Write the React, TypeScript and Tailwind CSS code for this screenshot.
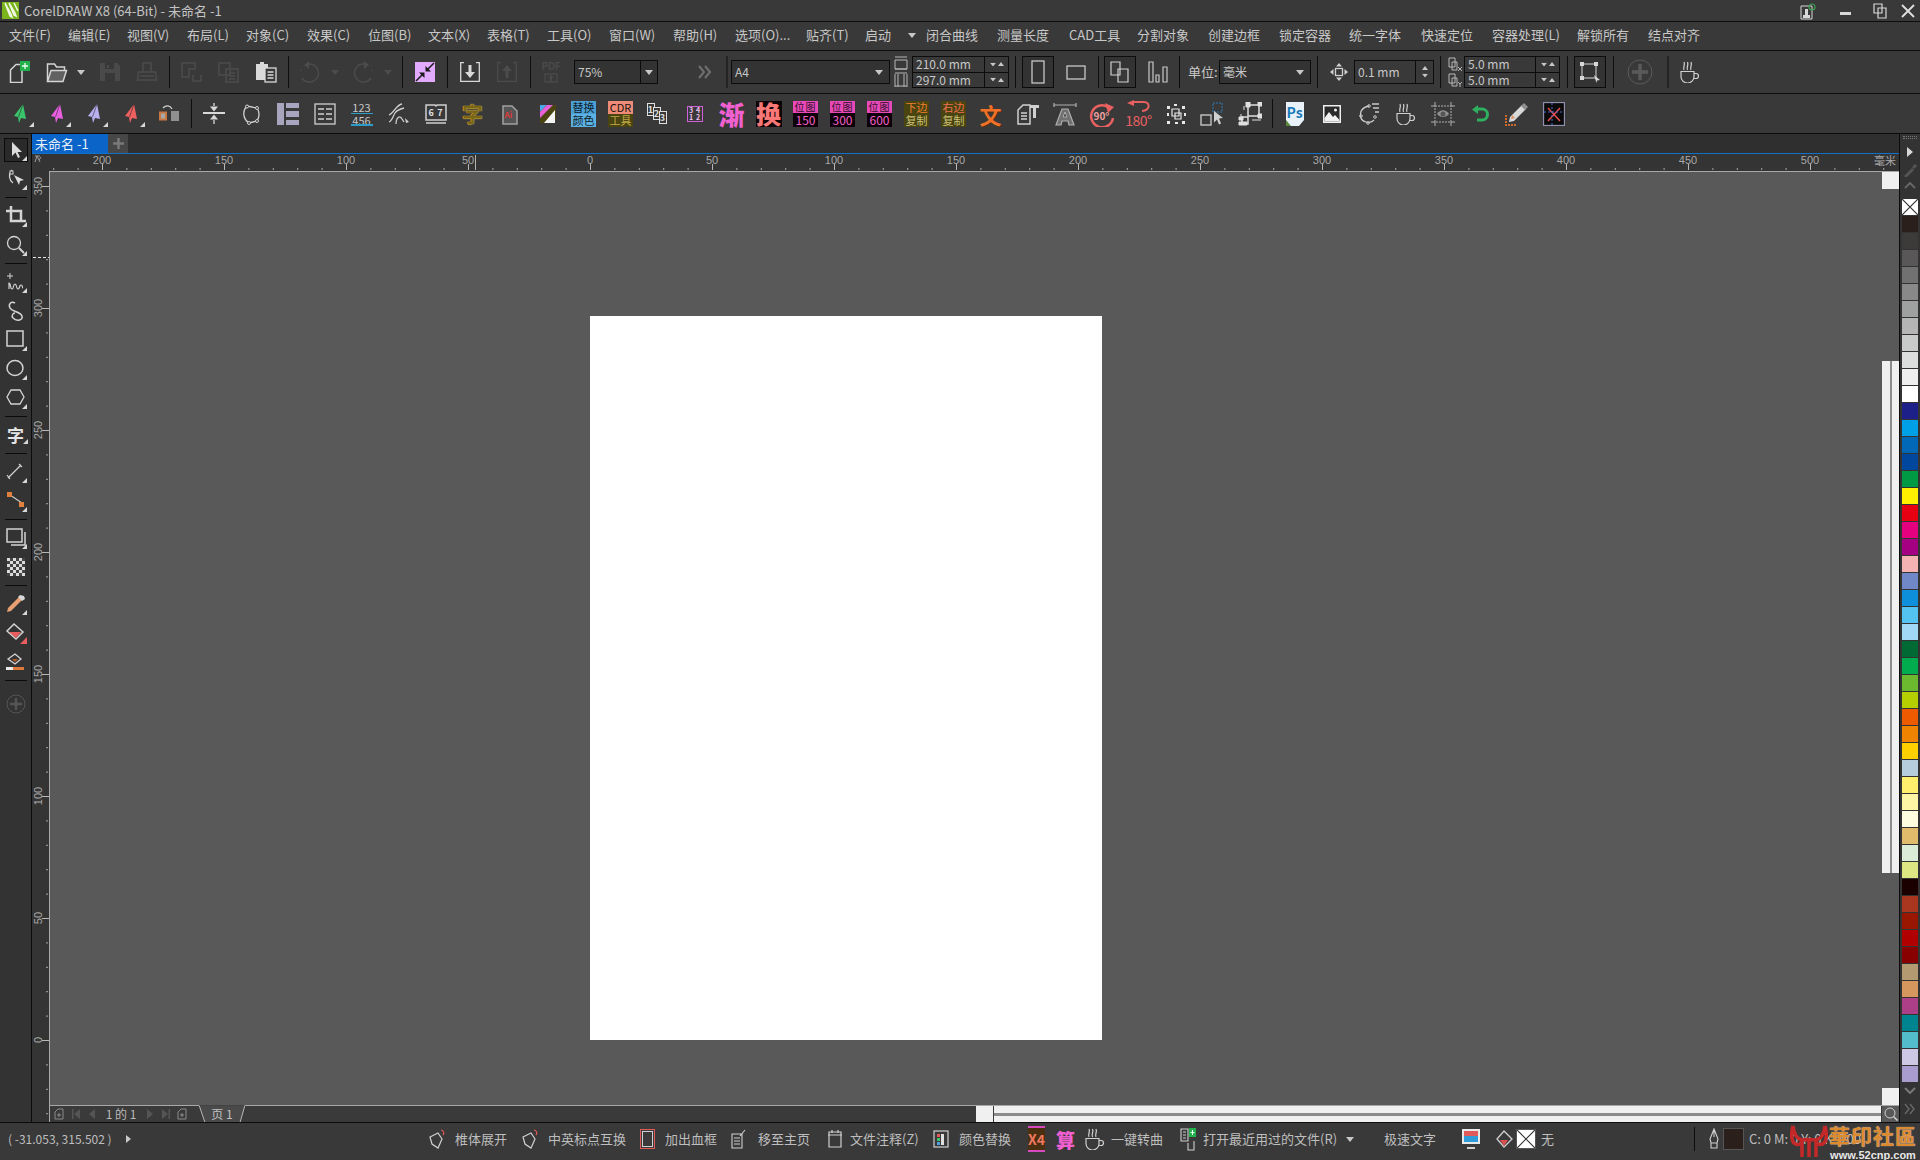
import React from "react";

type SvgProps = { w?: number; h?: number; className?: string; children?: React.ReactNode };

const Svg = ({ w = 22, h = 22, className = "", children }: SvgProps) => (
  <svg width={w} height={h} viewBox={`0 0 ${w} ${h}`} fill="none" stroke="currentColor" className={"block shrink-0 " + className}>
    {children}
  </svg>
);

const Down = ({ c = "fill-[#c8c8c8]" }: { c?: string }) => (
  <svg width="8" height="5" viewBox="0 0 8 5" className={"block " + c}><polygon points="0,0 8,0 4,5" /></svg>
);
const Up = ({ c = "fill-[#c8c8c8]" }: { c?: string }) => (
  <svg width="6" height="4" viewBox="0 0 6 4" className={"block " + c}><polygon points="0,4 6,4 3,0" /></svg>
);
const Flyout = () => <polygon points="22,17 22,22 17,22" fill="#d8d8d8" stroke="none" />;

/* ---------- menu ---------- */
const menus = [
  { t: "文件(F)", w: "w-[59px]" }, { t: "编辑(E)", w: "w-[59px]" }, { t: "视图(V)", w: "w-[60px]" }, { t: "布局(L)", w: "w-[59px]" },
  { t: "对象(C)", w: "w-[61px]" }, { t: "效果(C)", w: "w-[61px]" }, { t: "位图(B)", w: "w-[60px]" }, { t: "文本(X)", w: "w-[59px]" },
  { t: "表格(T)", w: "w-[60px]" }, { t: "工具(O)", w: "w-[62px]" }, { t: "窗口(W)", w: "w-[64px]" }, { t: "帮助(H)", w: "w-[62px]" },
  { t: "选项(O)...", w: "w-[71px]" }, { t: "贴齐(T)", w: "w-[59px]" }, { t: "启动", w: "w-[43px]" },
];
const menus2 = [
  { t: "闭合曲线", w: "w-[71px]" }, { t: "测量长度", w: "w-[72px]" }, { t: "CAD工具", w: "w-[68px]" }, { t: "分割对象", w: "w-[71px]" },
  { t: "创建边框", w: "w-[71px]" }, { t: "锁定容器", w: "w-[70px]" }, { t: "统一字体", w: "w-[72px]" }, { t: "快速定位", w: "w-[71px]" },
  { t: "容器处理(L)", w: "w-[85px]" }, { t: "解锁所有", w: "w-[71px]" }, { t: "结点对齐", w: "w-[71px]" },
];

/* ---------- toolbar 1 icons ---------- */
const NewDoc = () => (
  <Svg className="text-[#d4d4d4]">
    <path d="M1.5 9 7 3.5h6V21.5H1.5z" strokeWidth="1.5" />
    <rect x="11" y="0" width="10" height="10" fill="#22b14c" stroke="none" />
    <path d="M16 2v6M13 5h6" stroke="#eafff0" strokeWidth="1.3" />
  </Svg>
);
const OpenDoc = () => (
  <Svg className="text-[#d4d4d4]">
    <path d="M1.5 20V3h7l2 3h8v3" strokeWidth="1.5" />
    <path d="M5 9.5h15.5L17 20.5H1.5z" fill="#dcdcdc" fillOpacity=".25" strokeWidth="1.5" />
  </Svg>
);
const SaveIc = () => (
  <Svg className="text-[#4a4a4a]">
    <path d="M1 2h17l3 3v15H1z" fill="#4a4a4a" stroke="none" />
    <rect x="6" y="2" width="9" height="6" fill="#383838" stroke="none" />
    <rect x="6" y="12" width="10" height="8" fill="#383838" stroke="none" />
    <rect x="8" y="4" width="2" height="3" fill="#4a4a4a" stroke="none" />
  </Svg>
);
const PrintIc = () => (
  <Svg className="text-[#4c4c4c]">
    <path d="M7 11V2h8v9M2.5 11h17l1 8h-19zM4 15h14" strokeWidth="1.5" />
  </Svg>
);
const CutIc = () => (
  <Svg className="text-[#4c4c4c]">
    <path d="M1 2h13v6H8v8H1zM12 14v6h8v-6" strokeWidth="1.5" />
  </Svg>
);
const CopyIc = () => (
  <Svg className="text-[#4c4c4c]">
    <path d="M1 2h11v12H1zM8 8h12v13H8zM11 12h6M11 15h6M11 18h6" strokeWidth="1.5" />
  </Svg>
);
const PasteIc = () => (
  <Svg className="text-[#dadada]">
    <path d="M1 3h4V1h4v2h4v16H1z" fill="#dadada" stroke="none" />
    <rect x="10" y="7" width="11" height="14" fill="#383838" stroke="#dadada" strokeWidth="1.3" />
    <path d="M12.5 11h6M12.5 14h6M12.5 17h6" stroke="#dadada" strokeWidth="1.3" />
  </Svg>
);
const UndoIc = ({ flip }: { flip?: boolean }) => (
  <Svg className={"text-[#4c4c4c] " + (flip ? "-scale-x-100" : "")}>
    <path d="M10 3a9 9 0 1 1-7 14" strokeWidth="1.5" />
    <path d="M10 0v8L5 4z" fill="#4c4c4c" stroke="none" />
    <path d="M2 9v1" strokeWidth="1.5" />
  </Svg>
);
const PurpleIc = () => (
  <div className="w-[20px] h-[20px] bg-[#e2aafd]">
    <Svg w={20} h={20} className="text-[#1a1a1a]">
      <path d="M19 1 11.5 8.5M1 19l7.5-7.5" strokeWidth="1.5" />
      <path d="M10.5 4v5.500h5.500zM9.500 16v-5.500H4z" fill="#1a1a1a" stroke="none" />
    </Svg>
  </div>
);
const ImportIc = ({ up }: { up?: boolean }) => (
  <Svg w={20} h={20} className={up ? "text-[#4c4c4c]" : "text-[#d8d8d8]"}>
    <path d="M4 .7H.7v18.600h18.600V.7H16" strokeWidth="1.3" />
    {up ? <path d="M10 3l5 6h-3.500v7h-3V9H5z" fill="#4c4c4c" stroke="none" /> : <path d="M10 16l5-6h-3.500V3h-3v7H5z" fill="#d8d8d8" stroke="none" />}
  </Svg>
);
const Pdf = () => (
  <div className="flex flex-col items-center leading-none text-[#4a4a4a]">
    <span className="text-[10px] font-bold tracking-[-0.3px]">PDF</span>
    <Svg w={14} h={11} className="text-[#4a4a4a] mt-[1px]">
      <path d="M1 10V2h12v8z" strokeWidth="1.3" /><path d="M7 3l3 3H8v3H6V6H4z" fill="#4a4a4a" stroke="none" />
    </Svg>
  </div>
);
const Chevrons = ({ c = "text-[#707070]" }: { c?: string }) => (
  <Svg w={16} h={14} className={c}>
    <path d="M2 1l5 6-5 6M8 1l5 6-5 6" strokeWidth="2" />
  </Svg>
);

const Sep = ({ w, thick }: { w: string; thick?: boolean }) => (
  <div className={"flex justify-center self-stretch py-[5px] shrink-0 " + w}>
    <div className={thick ? "w-[2px] bg-[#232323]" : "w-[1px] bg-[#0e0e0e]"} />
  </div>
);

const Cell = ({ w, children }: { w: string; children?: React.ReactNode }) => (
  <div className={"flex items-center justify-center shrink-0 " + w}>{children}</div>
);

const Combo = ({ w, text, divider }: { w: string; text: string; divider?: boolean }) => (
  <div className={"flex h-[24px] items-center border border-[#0c0c0c] bg-[#333333] shrink-0 " + w}>
    <div className="flex-1 pl-[3px] text-[12px] text-[#c8c8c8]">{text}</div>
    <div className={"flex h-full w-[17px] items-center justify-center " + (divider ? "border-l border-[#0c0c0c]" : "pr-[4px]")}>
      <Down />
    </div>
  </div>
);

const Stepper = ({ w, a, b }: { w: string; a: string; b: string }) => (
  <div className={"flex h-[32px] flex-col border border-[#0c0c0c] shrink-0 " + w}>
    {[a, b].map((v, i) => (
      <div key={i} className={"flex flex-1 items-center " + (i === 1 ? "border-t border-[#0c0c0c]" : "")}>
        <div className="flex-1 pl-[3px] text-[12px] leading-none text-[#c8c8c8]">{v}</div>
        <div className="flex h-full w-[24px] items-center justify-around border-l border-[#0c0c0c] px-[3px]">
          <Down c="fill-[#c8c8c8] scale-75" /><Up />
        </div>
      </div>
    ))}
  </div>
);

const Boxed = ({ children }: { children?: React.ReactNode }) => (
  <div className="flex h-[32px] w-[32px] items-center justify-center border border-[#0c0c0c] bg-[#333333] shrink-0">{children}</div>
);

const Cup = ({ c = "text-[#d0d0d0]" }: { c?: string }) => (
  <Svg className={c}>
    <path d="M2 10.500v5a6.500 6.500 0 0 0 13 0v-5zM15 12.500h2a2.500 2.500 0 0 1 0 5h-2" strokeWidth="1.2" />
    <path d="M5 9c-1.500-3 1.500-4.500 0-8M8.500 9c-1.500-3 1.500-4.500 0-8M12 9c-1.500-3 1.500-4.500 0-8" strokeWidth="1.2" />
  </Svg>
);

function TopTools() {
  return (
    <div className="flex h-[43px] items-center border-b border-[#0c0c0c] pl-[1px] shrink-0">
      <Cell w="w-[38px]"><NewDoc /></Cell>
      <Cell w="w-[36px]"><OpenDoc /></Cell>
      <Cell w="w-[12px]"><Down /></Cell>
      <Cell w="w-[46px]"><SaveIc /></Cell>
      <Cell w="w-[28px]"><PrintIc /></Cell>
      <Sep w="w-[16px]" />
      <Cell w="w-[30px]"><CutIc /></Cell>
      <Cell w="w-[44px]"><CopyIc /></Cell>
      <Cell w="w-[30px]"><PasteIc /></Cell>
      <Sep w="w-[14px]" />
      <Cell w="w-[30px]"><UndoIc /></Cell>
      <Cell w="w-[20px]"><Down c="fill-[#4c4c4c]" /></Cell>
      <Cell w="w-[36px]"><UndoIc flip /></Cell>
      <Cell w="w-[14px]"><Down c="fill-[#4c4c4c]" /></Cell>
      <Sep w="w-[14px]" />
      <Cell w="w-[32px]"><PurpleIc /></Cell>
      <Sep w="w-[12px]" />
      <Cell w="w-[34px]"><ImportIc /></Cell>
      <Cell w="w-[40px]"><ImportIc up /></Cell>
      <Sep w="w-[6px]" />
      <Cell w="w-[36px]"><Pdf /></Cell>
      <div className="w-[5px]" />
      <Combo w="w-[84px]" text="75%" divider />
      <div className="w-[29px]" />
      <Cell w="w-[36px]"><Chevrons /></Cell>
      <Sep w="w-[8px]" thick />
      <Combo w="w-[159px]" text="A4" />
      <Cell w="w-[22px]">
        <Svg w={14} h={32} className="text-[#b8b8b8]">
          <path d="M1 1h12M1 13h12M1 4h12v9H1zM1 17h12M1 30h12" strokeWidth="1" />
          <path d="M1 18v13M13 18v13M4 18v13M10 18v13" strokeWidth="1" />
        </Svg>
      </Cell>
      <Stepper w="w-[97px]" a="210.0 mm" b="297.0 mm" />
      <Sep w="w-[12px]" />
      <div className="ml-[1px]"><Boxed><Svg w={14} h={24} className="text-[#c8c8c8]"><rect x="1" y="1" width="12" height="22" strokeWidth="1.3" /></Svg></Boxed></div>
      <Cell w="w-[43px]"><Svg w={20} h={15} className="text-[#c8c8c8]"><rect x="1" y="1" width="18" height="13" strokeWidth="1.3" /></Svg></Cell>
      <Sep w="w-[3px]" />
      <div className="w-[4px] shrink-0" />
      <Boxed>
        <Svg w={20} h={22} className="text-[#d0d0d0]"><path d="M1 1h9v13H1zM8 8h10v13H8z" fill="#383838" strokeWidth="1.2" /></Svg>
      </Boxed>
      <Cell w="w-[43px]">
        <Svg w={20} h={22} className="text-[#c8c8c8]"><path d="M1 1h4v20H1zM8 14h3v7H8zM15 6h4v15h-4z" strokeWidth="1.2" /></Svg>
      </Cell>
      <div className="w-[1px] self-stretch my-[5px] bg-[#0c0c0c]" />
      <div className="w-[39px] pl-[8px] text-[13px] text-[#c8c8c8] whitespace-nowrap shrink-0">单位:</div>
      <Combo w="w-[92px]" text="毫米" />
      <Sep w="w-[13px]" />
      <Cell w="w-[30px]">
        <Svg w={18} h={18} className="text-[#d0d0d0]">
          <rect x="5.500" y="5.500" width="7" height="7" strokeWidth="1.3" />
          <path d="M9 0l3 3.500H6zM9 18l3-3.500H6zM0 9l3.500 3V6zM18 9l-3.500 3V6z" fill="#d0d0d0" stroke="none" />
        </Svg>
      </Cell>
      <div className="flex h-[24px] w-[80px] items-center border border-[#0c0c0c] shrink-0">
        <div className="flex-1 pl-[3px] text-[12px] text-[#c8c8c8]">0.1 mm</div>
        <div className="flex h-full w-[18px] flex-col items-center justify-around border-l border-[#0c0c0c] py-[3px]">
          <Up /><Down c="fill-[#c8c8c8] scale-75" />
        </div>
      </div>
      <Sep w="w-[12px]" />
      <Cell w="w-[18px]">
        <Svg w={15} h={32} className="text-[#b8b8b8]">
          <path d="M1 2h6v9H1zM4 6h5v8H4zM1 18h6v9H1zM4 22h5v8H4z" strokeWidth="1" />
          <path d="M10 11l4 4M14 11l-4 4M10 26l2 2 2-2M12 28v3" strokeWidth="1" />
        </Svg>
      </Cell>
      <Stepper w="w-[96px]" a="5.0 mm" b="5.0 mm" />
      <Sep w="w-[14px]" />
      <Boxed>
        <Svg w={22} h={22} className="text-[#d8d8d8]">
          <path d="M3 3h14v14H3z" strokeWidth="1" />
          <path d="M1 1h4v4H1zM15 1h4v4h-4zM1 15h4v4H1z" fill="#d8d8d8" stroke="none" />
          <path d="M15 14l6 5-3 .5-.5 2.500z" fill="#d8d8d8" stroke="none" />
        </Svg>
      </Boxed>
      <Sep w="w-[14px]" />
      <Cell w="w-[40px]">
        <Svg w={26} h={26} className="text-[#5a5a5a]">
          <circle cx="13" cy="13" r="12" strokeWidth="1" />
          <path d="M13 5v16M5 13h16" strokeWidth="3.500" />
        </Svg>
      </Cell>
      <Sep w="w-[16px]" thick />
      <Cell w="w-[28px]"><Cup /></Cell>
    </div>
  );
}

/* ---------- toolbar 2 icons ---------- */
const Plane = ({ fill }: { fill: string }) => (
  <Svg w={26} h={26} className="text-[#1f1f1f]">
    <polygon points="15,3 6,15 10,16 11,22 13,17 18,18" fill={fill} stroke="none" />
    <path d="M15 3 10.500 16" stroke="#202020" strokeOpacity=".55" />
    <polygon points="26,21 26,26 21,26" fill="#d8d8d8" stroke="none" />
  </Svg>
);

const Badge = ({ a, b, ca, cb }: { a: string; b: string; ca: string; cb: string }) => (
  <div className="flex h-[26px] w-[25px] flex-col text-center leading-none whitespace-nowrap">
    <div className={"flex h-[13px] items-center justify-center text-[11px] leading-none " + ca}>{a}</div>
    <div className={"flex h-[13px] items-center justify-center text-[11px] leading-none " + cb}>{b}</div>
  </div>
);

const tools2a: React.ReactNode[] = [
  <Svg key="a" w={24} h={22} className="text-[#d8d8d8]">
    <path d="M1 10h22" strokeWidth="2" />
    <path d="M12 0v3M12 17v4" strokeWidth="1.3" />
    <path d="M8 3.500h8L12 8.500zM8 16.500h8l-4-5z" fill="#d8d8d8" stroke="none" />
  </Svg>,
  <Svg key="b" className="text-[#d0d0d0]">
    <path d="M7 3 17 5c2 3 3 8 0 13L9 20C3 16 2 8 7 3z" strokeWidth="1.3" />
    <circle cx="7" cy="3.500" r="1.500" fill="#383838" /><circle cx="17" cy="5" r="1.500" fill="#383838" /><circle cx="17" cy="18" r="1.500" fill="#383838" /><circle cx="9" cy="20" r="1.500" fill="#383838" />
  </Svg>,
  <Svg key="c" className="text-[#a8a6be]">
    <path d="M0 0h7v22H0zM9 0h13v5H9zM9 8h13v6H9zM9 17h13v5H9z" fill="#a8a6be" stroke="none" />
  </Svg>,
  <Svg key="d" className="text-[#d0d0d0]">
    <rect x="1" y="1" width="20" height="20" strokeWidth="1.300" />
    <path d="M4 6h6M12 6h6M4 11h6M12 11h6M4 16h6M12 16h6" strokeWidth="1.300" />
  </Svg>,
  <div key="e" className="relative flex h-[24px] w-[22px] flex-col items-center justify-between text-[11px] leading-[11px] text-[#c8c8c8]">
    <span>123</span>
    <span>456</span>
    <div className="absolute top-[11px] h-[1.500px] w-full bg-[#2e9cc8]" />
    <div className="absolute bottom-[0px] h-[1.500px] w-full bg-[#2e9cc8]" />
  </div>,
  <Svg key="f" className="text-[#d0d0d0]">
    <path d="M1 12C6 10 8 2 14 1M1 19c3-1 4-6 6-9 2-3 5-4 9-5M8 21c0-3 1-6 3-7 2-1 3 2 5 5" strokeWidth="1.300" />
    <path d="M17 15l4 4-3 1z" fill="#d0d0d0" stroke="none" />
  </Svg>,
  <div key="g" className="relative h-[22px] w-[22px]">
    <Svg w={22} h={22} className="text-[#d0d0d0]">
      <path d="M1 2h9l1 1 1-1h9v15H1zM1 20h20" strokeWidth="1.500" />
    </Svg>
    <div className="absolute left-[4px] top-[5px] flex w-[14px] justify-between text-[9px] font-bold leading-none text-[#e0e0e0]"><span>6</span><span>7</span></div>
  </div>,
  <div key="h" className="text-[21px] font-bold leading-none text-[#7a6614] [text-shadow:0_0_1px_#f0c850,0_0_1px_#f0c850]">字</div>,
  <div key="i" className="relative">
    <Svg w={16} h={22} className="text-[#a0a0a0]"><path d="M1 3h9l5 5v13H1z" fill="#555555" strokeWidth="1.500" /></Svg>
    <div className="absolute left-[3px] top-[8px] text-[8px] font-bold leading-none text-[#e03838]">Ai</div>
  </div>,
  <Svg key="j" w={18} h={20} className="text-[#000]">
    <path d="M2 1h16v15L14 19H2z" fill="#4a4410" stroke="none" />
    <path d="M2 1h7L2 8z" fill="#4aa8e8" stroke="none" />
    <path d="M9 1h6L2 14V8z" fill="#e860d8" stroke="none" />
    <path d="M17 6v13H6z" fill="#f4f4f4" stroke="none" />
  </Svg>,
];

const Stack123 = () => (
  <div className="relative h-[22px] w-[22px] text-[9px] font-bold leading-[9px] text-[#e0e0e0]">
    <span className="absolute left-0 top-0 flex h-[13px] w-[8px] items-center justify-center border border-[#e0e0e0]">1</span>
    <span className="absolute left-[6px] top-[4px] flex h-[13px] w-[8px] items-center justify-center border border-[#e0e0e0] bg-[#383838]">2</span>
    <span className="absolute left-[12px] top-[8px] flex h-[13px] w-[8px] items-center justify-center border border-[#e0e0e0] bg-[#383838]">3</span>
  </div>
);

const Pos = ({ n }: { n: string }) => (
  <div className="flex h-[26px] w-[25px] flex-col items-center leading-none">
    <div className="flex h-[12px] w-full items-center justify-center bg-[#e848b8] text-[10px] leading-none text-[#30102a] tracking-[1px]">位图</div>
    <div className="flex h-[14px] w-full items-center justify-center bg-[#0e0008] text-[12px] leading-none text-[#f060c8]">{n}</div>
  </div>
);

const tools2b: React.ReactNode[] = [
  <Badge key="a" a="替换" b="颜色" ca="bg-[#4aa0d4] text-[#10222e]" cb="bg-[#5cb2e2] text-[#10222e]" />,
  <Badge key="b" a="CDR" b="工具" ca="bg-[#ee8a78] text-[#1a1208]" cb="bg-[#4a4410] text-[#c0a848]" />,
  <Stack123 key="c" />,
  <div key="d" className="grid h-[16px] w-[16px] grid-cols-2 border border-[#d060d8] text-center text-[7px] font-bold leading-[7px] text-[#f0c0f0]">
    <span>3</span><span>4</span><span>1</span><span>2</span>
  </div>,
  <div key="e" className="text-[26px] font-black leading-none text-[#f060d0]">渐</div>,
  <div key="f" className="flex h-[26px] w-[26px] items-center justify-center bg-[#0c0404] text-[25px] font-black leading-none text-[#f87878]">换</div>,
  <Pos key="g" n="150" />,
  <Pos key="h" n="300" />,
  <Pos key="i" n="600" />,
  <Badge key="j" a="下边" b="复制" ca="bg-[#4a4410] text-[#f08030]" cb="bg-[#4a4410] text-[#c8c078]" />,
  <Badge key="k" a="右边" b="复制" ca="bg-[#4a4410] text-[#f07050]" cb="bg-[#4a4410] text-[#c8c078]" />,
  <div key="l" className="text-[22px] font-bold leading-none text-[#f07028] [text-shadow:1px_1px_0_#4a3010]">文</div>,
  <div key="m" className="relative h-[24px] w-[22px]">
    <Svg w={22} h={24} className="text-[#d0d0d0]">
      <path d="M1 8l5-5h7v19H1z" strokeWidth="1.500" />
      <path d="M4 11h6M4 14h6M4 17h6" strokeWidth="1.500" />
      <path d="M13 3h9v3h-3v10h-3V6h-3z" fill="#d0d0d0" stroke="none" />
    </Svg>
  </div>,
  <Svg key="n" w={24} h={24} className="text-[#b0b0b0]">
    <path d="M1 1v4M23 1v4M1 3h22" strokeWidth="1.200" />
    <path d="M9 7h6l6 16h-5l-1-4H9l-1 4H3z" fill="#707070" strokeWidth="1.200" />
    <path d="M10 15h4l-2-5z" fill="#383838" strokeWidth="1" />
  </Svg>,
  <div key="o" className="relative h-[26px] w-[26px]">
    <Svg w={26} h={26} className="text-[#e86060]">
      <path d="M19 6A11 11 0 1 0 24 17" strokeWidth="2.500" />
      <path d="M16 2l9 4-6 6z" fill="#e86060" stroke="none" />
    </Svg>
    <div className="absolute left-[5px] top-[10px] text-[10px] font-bold leading-none text-[#f0a0a0]">90°</div>
  </div>,
  <div key="p" className="relative flex h-[28px] w-[28px] flex-col items-center">
    <Svg w={26} h={13} className="text-[#e86060]">
      <path d="M8 2h10c6 0 7 8-2 9" strokeWidth="2" />
      <path d="M1 3 8 0v6z" fill="#e86060" stroke="none" />
    </Svg>
    <div className="text-[14px] font-normal leading-none tracking-[-0.5px] text-[#e86060]">180°</div>
  </div>,
  <Svg key="q" className="text-[#e8e8e8]">
    <path d="M7 6h7v7H7zM10 10h6v6h-6z" strokeWidth="1.200" />
    <path d="M2 3h3v3H2zM9 1h3v2H9zM17 3h3v3h-3zM2 10h2v3H2zM19 10h2v3h-2zM2 18h3v3H2zM10 19h3v2h-3zM17 18h3v3h-3z" fill="#e8e8e8" stroke="none" />
  </Svg>,
  <Svg key="r" w={26} h={24} className="text-[#d0d0d0]">
    <rect x="1" y="13" width="10" height="10" strokeWidth="1.300" />
    <rect x="13" y="1" width="9" height="9" stroke="#2e7ab0" strokeDasharray="2 1" />
    <path d="M14 9l9 7-4 .5 2 5-2 1-2-5-3 3z" fill="#d0d0d0" stroke="none" />
  </Svg>,
  <Svg key="s" w={24} h={24} className="text-[#e0e0e0]">
    <path d="M10 3h11v11H10z" strokeWidth="1.500" />
    <path d="M8 0h4v5H8zM20 0h4v4h-4zM20 12h4v4h-4zM1 15h4v3H1zM1 20h8v3H1zM14 18h9M3 12v3M6 4v4" fill="#e0e0e0" strokeWidth="1" />
    <path d="M4 15h6v7H4z" strokeWidth="1.500" />
  </Svg>,
];

const tools2c: React.ReactNode[] = [
  <div key="a" className="relative h-[24px] w-[18px]">
    <Svg w={18} h={24} className="text-[#e8f2f8]">
      <path d="M0 0h18v18l-5 6H0z" fill="#e8f2f8" stroke="none" />
      <path d="M0 18l5 6H0z" fill="#5a8a3a" stroke="none" />
    </Svg>
    <div className="absolute left-[1px] top-[3px] text-[14px] font-bold leading-none text-[#1c7ab8]">Ps</div>
  </div>,
  <Svg key="b" w={18} h={18} className="text-[#f0f0f0]">
    <rect x="0" y="0" width="18" height="18" fill="#f0f0f0" stroke="none" />
    <rect x="1.500" y="1.500" width="15" height="15" fill="#2a2a2a" stroke="none" />
    <path d="M1.500 13 6 7l4 5 2-2 4.500 5v1.500h-15z" fill="#f0f0f0" stroke="none" />
    <circle cx="12.500" cy="5" r="1.500" fill="#f0f0f0" stroke="none" />
  </Svg>,
  <Svg key="c" className="text-[#c8c8c8]">
    <path d="M11 3C5 4 1 8 3 15c1 3 8 7 13 2" strokeWidth="1.300" />
    <circle cx="11" cy="3" r="1.300" /><circle cx="3" cy="13" r="1.300" /><circle cx="10" cy="20" r="1.300" /><circle cx="17" cy="14" r="1.300" />
    <path d="M14 1h7M15 5h6M17 9h4" strokeWidth="1.300" />
  </Svg>,
  <Cup key="d" />,
  <Svg key="e" w={24} h={24} className="text-[#b0b0b0]">
    <path d="M4 4h16v16H4z" strokeDasharray="2 1" />
    <path d="M4 0v4M0 4h4M20 0v4M20 4h4M4 20v4M0 20h4M20 20v4M20 20h4" />
    <path d="M6 12c3-5 9-5 12 0-3 4-9 4-12 0z" fill="#909090" stroke="none" />
    <circle cx="12" cy="12" r="2.500" fill="#555555" stroke="none" />
  </Svg>,
  <Svg key="f" w={18} h={18} className="text-[#2eb060]">
    <path d="M5 4h6a5 5 0 0 1 0 11H6" strokeWidth="3" />
    <path d="M7 0v9L1 4.500z" fill="#2eb060" stroke="none" />
  </Svg>,
  <Svg key="g" w={24} h={24} className="text-[#d8d8d8]">
    <path d="M17 3l4 4-12 12-5 1 1-5z" fill="#d8d8d8" stroke="none" />
    <path d="M19 1l4 4-3 3-4-4z" fill="#909090" stroke="none" />
    <path d="M10 16l-4 1 1-4z" fill="#e09060" stroke="none" />
    <path d="M1 13v10h10" stroke="#d06a2a" strokeWidth="2" strokeDasharray="2 1" />
  </Svg>,
  <Svg key="h" w={22} h={24} className="text-[#9090b0]">
    <rect x=".5" y=".5" width="21" height="23" fill="#0a0a0a" strokeWidth="1.300" />
    <path d="M5 6l12 13M17 6 5 19" stroke="#e85050" strokeWidth="1.500" />
    <path d="M9 1v22M1 10h20" stroke="#4a6ad0" strokeDasharray="2 2" />
  </Svg>,
];

function SecondTools() {
  const planes = ["#3ac46c", "#e860e0", "#b8b0f0", "#ee6060"];
  return (
    <div className="flex h-[40px] items-center border-b border-[#0c0c0c] pl-[2px] shrink-0">
      {planes.map((p) => (
        <Cell key={p} w="w-[37px]"><Plane fill={p} /></Cell>
      ))}
      <Cell w="w-[37px]">
        <Svg w={22} h={20} className="text-[#d0d0d0]">
          <rect x="1" y="7.500" width="8" height="9" fill="#c87840" stroke="none" />
          <rect x="3" y="9.500" width="4" height="5" fill="#a8a8a8" stroke="none" />
          <rect x="13" y="7" width="8" height="10" fill="#909090" stroke="none" />
          <path d="M5 4c3-3 7-3 9 1" strokeWidth="1.300" />
        </Svg>
      </Cell>
      <Sep w="w-[8px]" />
      {tools2a.map((n, i) => <Cell key={i} w="w-[37px]">{n}</Cell>)}
      {tools2b.map((n, i) => <Cell key={i} w="w-[37px]">{n}</Cell>)}
      <Sep w="w-[8px]" />
      {tools2c.map((n, i) => <Cell key={i} w="w-[37px]">{n}</Cell>)}
    </div>
  );
}

/* ---------- left toolbox ---------- */
const Tool = ({ children, active }: { children?: React.ReactNode; active?: boolean }) => (
  <div className="flex h-[29px] items-center justify-center">
    <div className={"flex h-[24px] w-[24px] items-center justify-center " + (active ? "border border-[#0c0c0c] bg-[#2a2a2a]" : "")}>{children}</div>
  </div>
);
const ToolSep = () => <div className="flex h-[8px] items-center justify-center"><div className="h-[1px] w-[22px] bg-[#0c0c0c]" /></div>;

function Toolbox() {
  return (
    <div className="flex w-[32px] shrink-0 flex-col border-r border-[#0c0c0c] bg-[#333333] pt-[1px] text-[#d4d4d4]">
      <Tool active>
        <Svg>
          <path d="M7 3v14l3.500-3.500L13 19l2-1-2.500-5H17z" fill="#dcdcdc" stroke="none" />
          <Flyout />
        </Svg>
      </Tool>
      <Tool>
        <Svg>
          <path d="M7 2C3 6 4 12 8 15" strokeWidth="1.200" />
          <rect x="5" y="3" width="3" height="3" fill="#333" strokeWidth="1" />
          <path d="M9 7l10 5-4 1-1 4z" fill="#dcdcdc" stroke="none" />
          <Flyout />
        </Svg>
      </Tool>
      <ToolSep />
      <Tool>
        <Svg>
          <path d="M1 6h15v10M6 1v15h15" strokeWidth="2.500" />
          <Flyout />
        </Svg>
      </Tool>
      <Tool>
        <Svg>
          <circle cx="9" cy="9" r="6.500" strokeWidth="1.300" />
          <path d="M14 14l5 5" strokeWidth="2" />
          <Flyout />
        </Svg>
      </Tool>
      <ToolSep />
      <Tool>
        <Svg>
          <path d="M5 2v6M2 5h6" strokeWidth="1" />
          <path d="M4 18v-6c2 0 1 6 3 6s1-5 3-5 1 5 3 5 1-4 3-4 1 3 2 3" strokeWidth="1.200" />
          <Flyout />
        </Svg>
      </Tool>
      <Tool>
        <Svg>
          <path d="M10 3C6 1 3 4 5 8c2 4 10 3 12 8 1 4-5 6-9 2-2-2 0-5 2-5" strokeWidth="1.500" />
        </Svg>
      </Tool>
      <Tool>
        <Svg>
          <rect x="2" y="2" width="16" height="15" strokeWidth="1.500" />
          <Flyout />
        </Svg>
      </Tool>
      <Tool>
        <Svg>
          <ellipse cx="10" cy="10" rx="8" ry="7.500" strokeWidth="1.500" />
          <Flyout />
        </Svg>
      </Tool>
      <Tool>
        <Svg>
          <path d="M6 3h9l4 7-4 7H6l-4-7z" strokeWidth="1.300" />
          <Flyout />
        </Svg>
      </Tool>
      <ToolSep />
      <div className="relative flex h-[29px] items-center justify-center">
        <span className="text-[17px] font-bold leading-none text-[#e4e4e4]">字</span>
        <div className="absolute bottom-[5px] right-[3px]"><Svg w={5} h={5}><polygon points="5,0 5,5 0,5" fill="#d8d8d8" stroke="none" /></Svg></div>
      </div>
      <ToolSep />
      <Tool>
        <Svg>
          <path d="M3 17 16 4M2 14l3 4M14 3l3 3" strokeWidth="1.200" />
          <Flyout />
        </Svg>
      </Tool>
      <Tool>
        <Svg>
          <path d="M5 5l12 8" stroke="#cccccc" strokeWidth="1.200" />
          <rect x="2" y="2" width="5" height="5" fill="#e0803c" stroke="none" />
          <rect x="14" y="12" width="5" height="5" fill="#e0803c" stroke="none" />
          <Flyout />
        </Svg>
      </Tool>
      <ToolSep />
      <Tool>
        <Svg>
          <rect x="2" y="2" width="15" height="13" strokeWidth="1.500" />
          <path d="M20 5v13H6" strokeWidth="1.500" />
          <Flyout />
        </Svg>
      </Tool>
      <Tool>
        <svg width="18" height="18" viewBox="0 0 18 18">
          <rect width="18" height="18" fill="#dcdcdc" />
          <path d="M3 0h3v3H3zM9 0h3v3H9zM15 0h3v3h-3zM0 3h3v3H0zM6 3h3v3H6zM12 3h3v3h-3zM3 6h3v3H3zM9 6h3v3H9zM15 6h3v3h-3zM0 9h3v3H0zM6 9h3v3H6zM12 9h3v3h-3zM3 12h3v3H3zM9 12h3v3H9zM15 12h3v3h-3zM0 15h3v3H0zM6 15h3v3H6zM12 15h3v3h-3z" fill="#444444" />
        </svg>
      </Tool>
      <ToolSep />
      <Tool>
        <Svg>
          <path d="M14 4l3 3L6 18l-4 1 1-4z" fill="#e8a070" stroke="none" />
          <path d="M15 2l4 1 1 3-3 2-4-4z" fill="#d8d8d8" stroke="none" />
          <Flyout />
        </Svg>
      </Tool>
      <Tool>
        <Svg>
          <path d="M2 9l7-7 9 8-7 7z" strokeWidth="1.500" />
          <path d="M4 10h12l-5 6z" fill="#e85e5e" stroke="none" />
          <polygon points="22,15 22,22 15,22" fill="#e85e5e" stroke="none" />
        </Svg>
      </Tool>
      <Tool>
        <Svg>
          <path d="M3 8l7-5 6 5-6 5z" strokeWidth="1.300" />
          <path d="M7 8h6l-3 3z" fill="#b05a28" stroke="none" />
          <path d="M1 16h7v3H1z" fill="#e8e8e8" stroke="none" />
          <path d="M8 16h11v3H8z" fill="#e07a3a" stroke="none" />
        </Svg>
      </Tool>
      <ToolSep />
      <div className="mt-[5px] flex h-[29px] items-center justify-center">
        <Svg w={20} h={20} className="text-[#555555]">
          <circle cx="10" cy="10" r="9" strokeWidth="1" />
          <path d="M10 4v12M4 10h12" strokeWidth="2.500" />
        </Svg>
      </div>
    </div>
  );
}

/* ---------- rulers ---------- */
const hLabels = [200, 150, 100, 50, 0, 50, 100, 150, 200, 250, 300, 350, 400, 450, 500];

function HRuler() {
  // one mm is 2.44 px, 0 sits at x=590 of the page, the ruler starts at x=32
  const x0 = 558;
  const minors: number[] = [];
  for (let m = -220; m <= 545; m += 10) minors.push(x0 + m * 2.44);
  return (
    <div className="h-[17px] bg-[#343434] shrink-0">
      <svg width="1867" height="17" viewBox="0 0 1867 17" className="block">
        <path d="M3 2h5M5 2l-2 6M5 2l3 6M9 3l-2 3" stroke="#9a9a9a" />
        {minors.map((x, i) => <rect key={i} x={x} y={14} width={1} height={2} fill="#a8a8a8" />)}
        {hLabels.map((v, i) => {
          const x = x0 + (i - 4) * 50 * 2.44;
          return (
            <g key={i}>
              <rect x={x} y={10} width={1} height={6} fill="#b8b8b8" />
              <text x={x} y={10} textAnchor="middle" fontSize="11" fill="#a8a8a8" fontFamily="'Liberation Sans Narrow','Liberation Sans',sans-serif">{v}</text>
            </g>
          );
        })}
        <rect x={443} y={1} width={1} height={15} fill="#e8e8e8" opacity=".7" />
        <text x={1842} y={11} fontSize="11" fill="#a8a8a8" fontFamily="'Noto Sans CJK SC',sans-serif">毫米</text>
      </svg>
    </div>
  );
}

function VRuler() {
  const y0 = 869; // 0 mm sits at y=1040 of the page, the ruler starts at y=171
  const labels = [350, 300, 250, 200, 150, 100, 50, 0];
  const minors: number[] = [];
  for (let m = -30; m <= 350; m += 10) minors.push(y0 - m * 2.44);
  return (
    <div className="w-[17px] bg-[#343434] shrink-0">
      <svg width="17" height="951" viewBox="0 0 17 951" className="block">
        {minors.map((y, i) => <rect key={i} x={14} y={y} width={2} height={1} fill="#a8a8a8" />)}
        {labels.map((v) => {
          const y = y0 - v * 2.44;
          return (
            <g key={v}>
              <rect x={10} y={y} width={7} height={1} fill="#b8b8b8" />
              <text transform={`translate(10 ${y}) rotate(-90)`} textAnchor="middle" fontSize="11" fill="#a8a8a8" fontFamily="'Liberation Sans Narrow','Liberation Sans',sans-serif">{v}</text>
            </g>
          );
        })}
        <path d="M1 86.500h16" stroke="#e8e8e8" strokeDasharray="3 2" />
      </svg>
    </div>
  );
}

/* ---------- palette ---------- */
const swatches = [
  "bg-[#2a1f1a]", "bg-[#3d3a3a]", "bg-[#595757]", "bg-[#727171]", "bg-[#898989]", "bg-[#9fa0a0]", "bg-[#b5b5b6]", "bg-[#c9caca]", "bg-[#dcdddd]", "bg-[#efefef]", "bg-[#ffffff]",
  "bg-[#1d2088]", "bg-[#00a0e9]", "bg-[#0068b7]", "bg-[#00479d]", "bg-[#009944]", "bg-[#fff100]", "bg-[#e60012]", "bg-[#e4007f]", "bg-[#a40081]", "bg-[#f5b2b2]", "bg-[#7088c8]", "bg-[#0e8fdc]", "bg-[#54c3f1]", "bg-[#a0d8f5]",
  "bg-[#006934]", "bg-[#00ac4e]", "bg-[#6cb82f]", "bg-[#b5cf00]", "bg-[#ee5a00]", "bg-[#f08300]", "bg-[#ffd000]", "bg-[#b6cdde]", "bg-[#ffef6c]", "bg-[#fff6a5]", "bg-[#fffde0]", "bg-[#dfbb6b]", "bg-[#dbecd8]", "bg-[#dde682]",
  "bg-[#1b0000]", "bg-[#a9361e]", "bg-[#991600]", "bg-[#b00000]", "bg-[#890000]", "bg-[#b49a70]", "bg-[#d5975e]", "bg-[#ad3f88]", "bg-[#008490]", "bg-[#54bdcc]", "bg-[#cdc9e4]", "bg-[#a99ccf]",
];

const NoneBox = ({ w, h }: { w: number; h: number }) => (
  <svg width={w} height={h} viewBox={`0 0 ${w} ${h}`} className="block shrink-0">
    <rect width={w} height={h} fill="#ffffff" />
    <path d={`M0 0L${w} ${h}M${w} 0L0 ${h}`} stroke="#333333" strokeWidth="1.200" />
  </svg>
);

function Palette() {
  return (
    <div className="flex w-[21px] shrink-0 flex-col border-l border-[#0c0c0c] bg-[#333333] pl-[2px]">
      <div className="flex h-[65px] flex-col items-center pr-[3px]">
        <div className="mt-[2px] h-[1px] w-[14px] border-t border-dotted border-[#777777]" />
        <div className="mt-[1px] h-[1px] w-[14px] border-t border-dotted border-[#777777]" />
        <Svg w={6} h={10} className="mt-[8px]"><polygon points="0,0 6,5 0,10" fill="#d8d8d8" stroke="none" /></Svg>
        <Svg w={14} h={14} className="mt-[6px] text-[#555555]"><path d="M1 13l8-8 2 2-8 8zM9 4l3-3 2 2-3 3z" fill="#555555" stroke="none" /></Svg>
        <Svg w={12} h={7} className="mt-[5px] text-[#666666]"><path d="M1 6l5-5 5 5" strokeWidth="2" /></Svg>
      </div>
      <div className="mb-[1px] w-[16px] h-[16px]"><NoneBox w={16} h={16} /></div>
      {swatches.map((c, i) => (
        <div key={i} className={"mb-[1px] h-[16px] w-[16px] " + c} />
      ))}
      <div className="flex flex-col items-center pr-[3px]">
        <Svg w={12} h={7} className="mt-[4px] text-[#777777]"><path d="M1 1l5 5 5-5" strokeWidth="2" /></Svg>
        <Svg w={12} h={12} className="mt-[9px] text-[#666666]"><path d="M1 1l4 5-4 5M6 1l4 5-4 5" strokeWidth="1.500" /></Svg>
      </div>
    </div>
  );
}

/* ---------- status bar ---------- */
const St = ({ ml, children }: { ml: string; children?: React.ReactNode }) => (
  <div className={"flex items-center shrink-0 whitespace-nowrap " + ml}>{children}</div>
);
const TagIc = () => (
  <Svg w={18} h={20} className="text-[#d0d0d0]">
    <path d="M1 8 9 4l4 6-4 9-6-4z" strokeWidth="1.200" />
    <path d="M12 1a3 3 0 0 1 2 5" stroke="#e85a5a" strokeWidth="1.200" />
  </Svg>
);

function StatusBar() {
  return (
    <div className="relative flex h-[38px] shrink-0 items-center border-t border-[#0c0c0c] pb-[5px] text-[13px] text-[#bebebe]">
      <St ml="ml-[8px] w-[115px]"><span className="text-[12px]">( -31.053, 315.502 )</span></St>
      <St ml="ml-[3px]"><Svg w={5} h={8}><polygon points="0,0 5,4 0,8" fill="#c8c8c8" stroke="none" /></Svg></St>
      <St ml="ml-[298px]"><TagIc /></St>
      <St ml="ml-[8px] w-[53px]">椎体展开</St>
      <St ml="ml-[14px]"><TagIc /></St>
      <St ml="ml-[8px] w-[79px]">中英标点互换</St>
      <St ml="ml-[13px]">
        <div className="flex h-[20px] w-[15px] items-center justify-center border border-[#e05a5a]"><div className="h-[16px] w-[11px] border border-[#d0d0d0]" /></div>
      </St>
      <St ml="ml-[10px] w-[52px]">加出血框</St>
      <St ml="ml-[14px]">
        <Svg w={16} h={20} className="text-[#d0d0d0]"><path d="M1 5h10v14H1zM3 9h6M3 12h6M3 15h6M9 7l5-6" strokeWidth="1.100" /></Svg>
      </St>
      <St ml="ml-[11px] w-[52px]">移至主页</St>
      <St ml="ml-[17px]">
        <Svg w={16} h={20} className="text-[#d0d0d0]"><path d="M2 3h12v15H2zM1 6h14M5 1v3M11 1v3" strokeWidth="1.200" /></Svg>
      </St>
      <St ml="ml-[7px] w-[68px]">文件注释(Z)</St>
      <St ml="ml-[15px]">
        <Svg w={16} h={18} className="text-[#d0d0d0]">
          <rect x="1" y="1" width="14" height="16" strokeWidth="1.200" />
          <rect x="4" y="4" width="3" height="3" fill="#e85a5a" stroke="none" />
          <rect x="4" y="8" width="3" height="3" fill="#3ac46c" stroke="none" />
          <rect x="4" y="12" width="3" height="3" fill="#4aa0e0" stroke="none" />
          <rect x="8" y="4" width="3" height="11" fill="#e0e0e0" stroke="none" />
        </Svg>
      </St>
      <St ml="ml-[10px] w-[52px]">颜色替换</St>
      <St ml="ml-[17px]">
        <div className="flex h-[26px] w-[17px] items-center justify-center border-y-2 border-[#d848c0] bg-[#4a3010] text-[14px] font-bold leading-none text-[#f07860]">X4</div>
      </St>
      <St ml="ml-[11px]"><span className="text-[19px] font-black leading-none text-[#f060d0]">算</span></St>
      <St ml="ml-[9px]"><Cup /></St>
      <St ml="ml-[5px] w-[52px]">一键转曲</St>
      <St ml="ml-[17px]">
        <Svg w={16} h={24} className="text-[#d0d0d0]">
          <path d="M1 2h7v12H1zM3 5h3M3 8h3M3 11h3M8 16v7h6v-9" strokeWidth="1.100" />
          <rect x="9" y="1" width="7" height="9" fill="#22b14c" stroke="none" />
          <path d="M12.500 3v5M10.500 5.500h4" stroke="#eafff0" />
        </Svg>
      </St>
      <St ml="ml-[7px] w-[131px]">打开最近用过的文件(R)</St>
      <St ml="ml-[12px]"><Down /></St>
      <St ml="ml-[30px] w-[52px]">极速文字</St>
      <St ml="ml-[25px]">
        <Svg w={20} h={22} className="text-[#d0d0d0]">
          <rect x="1" y="1" width="18" height="15" fill="#e8e8e8" stroke="none" />
          <rect x="3" y="3" width="14" height="5" fill="#e05a5a" stroke="none" />
          <rect x="3" y="8" width="14" height="6" fill="#2e9cd8" stroke="none" />
          <path d="M6 20h8" strokeWidth="2" />
        </Svg>
      </St>
      <St ml="ml-[15px]">
        <Svg w={18} h={22} className="text-[#d0d0d0]">
          <path d="M1 11l7-8 8 8-8 8z" strokeWidth="1.300" />
          <path d="M4 12h8l-4 6z" fill="#d85050" stroke="none" />
        </Svg>
      </St>
      <St ml="ml-[2px]"><div className="h-[20px] w-[20px] border border-[#555555]"><NoneBox w={18} h={18} /></div></St>
      <St ml="ml-[5px] w-[16px]">无</St>
      <div className="ml-[137px] h-[24px] w-[1px] bg-[#0c0c0c]" />
      <St ml="ml-[14px]">
        <Svg w={10} h={22} className="text-[#d0d0d0]"><path d="M5 1l4 10-1 4H2l-1-4zM5 1v8M2 15h6v5H2z" strokeWidth="1.100" /></Svg>
      </St>
      <St ml="ml-[4px]"><div className="h-[22px] w-[21px] border border-[#555555] bg-[#2a1f1a]" /></St>
      <St ml="ml-[5px]">C: 0 M: 0 Y: 0 K: 100</St>

      {/* watermark stamped over the bar */}
      <div className="absolute right-[2px] top-[-17px] flex h-[54px] w-[128px] items-start">
        <Svg w={38} h={34} className="mt-[19px] text-[#c42828]">
          <path d="M3 1c1 8 4 13 9 14 6-1 8-1 14 0 5-1 8-6 9-14M3 1c-2 8-2 14 1 17 3 3 6 1 7 0M35 1c2 8 2 14-1 17-3 3-6 1-7 0M12 15v17M19 15v17M26 15v17" strokeWidth="3.500" />
        </Svg>
        <div className="flex w-[90px] shrink-0 flex-col items-center">
          <div className="mt-[18px] whitespace-nowrap text-[21px] font-bold leading-[22px] tracking-[1px] text-[#dc8a30] [text-shadow:0_0_1px_#fff0d0]">華印社區</div>
          <div className="mt-[4px] whitespace-nowrap font-['Liberation_Sans',sans-serif] text-[11px] font-bold leading-none text-[#e8e8e8] [text-shadow:1px_1px_1px_#333333]">www.52cnp.com</div>
        </div>
      </div>
    </div>
  );
}

/* ---------- app ---------- */
export default function App() {
  return (
    <div className="flex h-[1160px] w-[1920px] flex-col overflow-hidden bg-[#393939] font-['Noto_Sans_CJK_SC','Liberation_Sans',sans-serif] text-[13px] text-[#c8c8c8]">
      {/* title bar */}
      <div className="flex h-[22px] shrink-0 items-center border-b border-[#0c0c0c] pl-[2px]">
        <svg width="17" height="17" viewBox="0 0 17 17" className="block shrink-0">
          <rect width="17" height="17" fill="#7ab51d" />
          <path d="M3 1l5 13 2 1-1-3zM7 1l5 12 2 1-1-3zM12 1l4 8" stroke="#f4f8e8" strokeWidth="1.500" fill="none" />
        </svg>
        <div className="ml-[5px] text-[13px] leading-none text-[#c4c4c4]">CorelDRAW X8 (64-Bit) - 未命名 -1</div>
        <div className="flex-1" />
        <Svg w={16} h={18} className="text-[#d8d8d8]">
          <path d="M1 4h11v13H1z" strokeWidth="1" />
          <path d="M3 13h7v3H3zM5 7h3v6H5z" fill="#d8d8d8" stroke="none" />
          <circle cx="12" cy="5" r="3" stroke="#3aa050" strokeWidth="1.200" />
        </Svg>
        <div className="ml-[24px] h-[3px] w-[11px] translate-y-[3px] bg-[#d8d8d8]" />
        <Svg w={14} h={16} className="ml-[22px] text-[#d8d8d8]"><path d="M1 1h8v9H1zM5 5h8v10H5z" strokeWidth="1.200" /></Svg>
        <Svg w={14} h={14} className="ml-[14px] mr-[5px] text-[#e0e0e0]"><path d="M1 1l12 12M13 1 1 13" strokeWidth="1.800" /></Svg>
      </div>

      {/* menu bar */}
      <div className="flex h-[29px] shrink-0 items-center border-b border-[#0c0c0c] pb-[2px] pl-[9px] text-[13px] text-[#c8c8c8]">
        {menus.map((m) => <div key={m.t} className={"shrink-0 whitespace-nowrap " + m.w}>{m.t}</div>)}
        <div className="flex w-[18px] shrink-0 items-center"><Down /></div>
        {menus2.map((m) => <div key={m.t} className={"shrink-0 whitespace-nowrap " + m.w}>{m.t}</div>)}
      </div>

      <TopTools />
      <SecondTools />

      {/* work area */}
      <div className="flex min-h-0 flex-1">
        <Toolbox />
        <div className="flex min-w-0 flex-1 flex-col">
          <div className="flex h-[20px] shrink-0 border-b border-[#1272c8] bg-[#2f2f2f]">
            <div className="flex w-[76px] items-center bg-[#0b64c8] pl-[3px] text-[13px] leading-none text-[#e8f0f8]">未命名 -1</div>
            <div className="flex w-[20px] items-center justify-center bg-[#474747]">
              <Svg w={11} h={11} className="text-[#7a7a7a]"><path d="M5.500 0v11M0 5.500h11" strokeWidth="2.500" /></Svg>
            </div>
          </div>
          <HRuler />
          <div className="flex min-h-0 flex-1">
            <VRuler />
            <div className="flex min-w-0 flex-1 flex-col">
              <div className="flex min-h-0 flex-1 border-l border-t border-[#a8a8a8] bg-[#595959]">
                <div className="flex-1 pl-[540px] pt-[144px]">
                  <div className="h-[724px] w-[512px] bg-white" />
                </div>
                <div className="flex w-[17px] shrink-0 flex-col">
                  <div className="h-[17px] bg-[#f0f0f0]" />
                  <div className="h-[172px]" />
                  <div className="flex h-[512px] justify-center bg-[#f0f0f0]"><div className="w-[2px] bg-[#8c8c8c]" /></div>
                  <div className="h-[215px]" />
                  <div className="h-[17px] bg-[#f0f0f0]" />
                </div>
              </div>
              <div className="flex h-[17px] shrink-0 border-t border-[#a8a8a8] border-l bg-[#3a3a3a] text-[#8a8a8a]">
                <div className="flex w-[926px] items-center">
                  <Cell w="w-[18px]"><Svg w={10} h={12}><path d="M1 4l3-3h5v10H1zM3 7h4M5 5v4" strokeWidth="1" /></Svg></Cell>
                  <Cell w="w-[16px]"><Svg w={8} h={10} className="text-[#555555]"><path d="M0 0h1.500v10H0zM8 0v10L2 5z" fill="#555555" stroke="none" /></Svg></Cell>
                  <Cell w="w-[16px]"><Svg w={6} h={10} className="text-[#555555]"><path d="M6 0v10L0 5z" fill="#555555" stroke="none" /></Svg></Cell>
                  <div className="w-[42px] text-center text-[12px] leading-none text-[#b8b8b8] whitespace-nowrap">1 的 1</div>
                  <Cell w="w-[16px]"><Svg w={6} h={10}><path d="M0 0v10l6-5z" fill="#555555" stroke="none" /></Svg></Cell>
                  <Cell w="w-[16px]"><Svg w={8} h={10}><path d="M0 0v10l6-5zM6.500 0H8v10H6.500z" fill="#555555" stroke="none" /></Svg></Cell>
                  <Cell w="w-[16px]"><Svg w={10} h={12}><path d="M1 4l3-3h5v10H1zM3 7h4M5 5v4" strokeWidth="1" /></Svg></Cell>
                  <div className="relative ml-[9px] flex h-[17px] w-[46px] items-center justify-center text-[12px] leading-none text-[#c0c0c0]">
                    <svg width="46" height="18" viewBox="0 0 46 18" className="absolute left-0 top-[-1px]">
                      <path d="M0 0L6 17.500H41L46 0" fill="#4a4a4a" stroke="#b8b8b8" />
                      <rect x="0" y="-1" width="46" height="1.500" fill="#3a3a3a" />
                    </svg>
                    <span className="relative">页 1</span>
                  </div>
                </div>
                <div className="flex-1 bg-[#f0f0f0] pl-[17px]">
                  <div className="flex h-full items-center border-l border-r border-[#3a3a3a]"><div className="h-[3px] w-full bg-[#8c8c8c]" /></div>
                </div>
                <div className="flex w-[17px] items-center justify-center bg-[#595959] text-[#d0d0d0]">
                  <Svg w={14} h={14}><circle cx="6" cy="6" r="5" strokeWidth="1" /><path d="M9.500 9.500l4 4" strokeWidth="1.500" /></Svg>
                </div>
              </div>
            </div>
          </div>
        </div>
        <Palette />
      </div>

      <StatusBar />
    </div>
  );
}
